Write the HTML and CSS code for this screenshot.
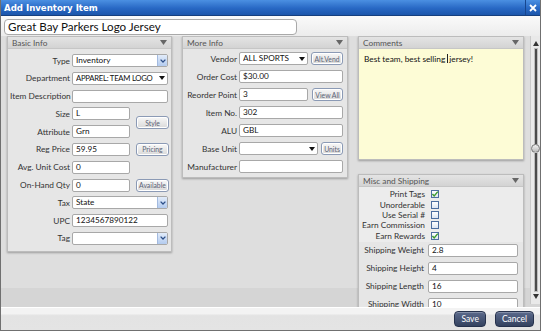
FILE: index.html
```html
<!DOCTYPE html>
<html>

<head>
    <title>Add Inventory Item</title>
    <link rel="stylesheet" href="styles.css">
</head>

<body>
    <div class="window">
        <div class="titlebar">
            <span class="title">Add Inventory Item</span>
            <span class="close">
                <svg width="8" height="8" viewBox="0 0 8 8"><path d="M1 1 L7 7 M7 1 L1 7" stroke="#fff" stroke-width="1.8" /></svg>
            </span>
        </div>

        <div class="namebar">
            <div class="name-input">Great Bay Parkers Logo Jersey</div>
        </div>

        <div class="content">
            <!-- Basic Info -->
            <section class="panel basic">
                <div class="panel-head">
                    <span>Basic Info</span>
                    <svg class="collapse" width="7" height="5" viewBox="0 0 7 5"><polygon points="0,0 7,0 3.5,5" fill="#666" /></svg>
                </div>
                <div class="grid">
                    <label>Type</label>
                    <div class="input sel wide"><span class="val">Inventory</span><span class="drop"><svg width="6" height="4" viewBox="0 0 6 4"><path d="M0.6 0.6 L3 3 L5.4 0.6" fill="none" stroke="#2d4f88" stroke-width="1.3" /></svg></span></div>

                    <label>Department</label>
                    <div class="input sel wide"><span class="val tight">APPAREL: TEAM LOGO</span><span class="tri"><svg width="6" height="4" viewBox="0 0 6 4"><polygon points="0,0 6,0 3,4" fill="#111" /></svg></span></div>

                    <label>Item Description</label>
                    <div class="input wide"></div>

                    <label>Size</label>
                    <div class="input">L</div>
                    <div class="sbtn span2">Style</div>

                    <label>Attribute</label>
                    <div class="input">Grn</div>

                    <label>Reg Price</label>
                    <div class="input">59.95</div>
                    <div class="sbtn">Pricing</div>

                    <label>Avg. Unit Cost</label>
                    <div class="input">0</div>
                    <div></div>

                    <label>On-Hand Qty</label>
                    <div class="input">0</div>
                    <div class="sbtn">Available</div>

                    <label>Tax</label>
                    <div class="input sel wide"><span class="val">State</span><span class="drop"><svg width="6" height="4" viewBox="0 0 6 4"><path d="M0.6 0.6 L3 3 L5.4 0.6" fill="none" stroke="#2d4f88" stroke-width="1.3" /></svg></span></div>

                    <label>UPC</label>
                    <div class="input wide">1234567890122</div>

                    <label>Tag</label>
                    <div class="input sel wide"><span class="val"></span><span class="drop"><svg width="6" height="4" viewBox="0 0 6 4"><path d="M0.6 0.6 L3 3 L5.4 0.6" fill="none" stroke="#2d4f88" stroke-width="1.3" /></svg></span></div>
                </div>
            </section>

            <!-- More Info -->
            <section class="panel more">
                <div class="panel-head">
                    <span>More Info</span>
                    <svg class="collapse" width="7" height="5" viewBox="0 0 7 5"><polygon points="0,0 7,0 3.5,5" fill="#666" /></svg>
                </div>
                <div class="rows">
                    <div class="row">
                        <label>Vendor</label>
                        <div class="input sel"><span class="val">ALL SPORTS</span><span class="tri"><svg width="6" height="4" viewBox="0 0 6 4"><polygon points="0,0 6,0 3,4" fill="#111" /></svg></span></div>
                        <div class="sbtn vend">Alt.Vend</div>
                    </div>
                    <div class="row">
                        <label>Order Cost</label>
                        <div class="input">$30.00</div>
                    </div>
                    <div class="row">
                        <label>Reorder Point</label>
                        <div class="input">3</div>
                        <div class="sbtn viewall">View All</div>
                    </div>
                    <div class="row">
                        <label>Item No.</label>
                        <div class="input">302</div>
                    </div>
                    <div class="row">
                        <label>ALU</label>
                        <div class="input">GBL</div>
                    </div>
                    <div class="row">
                        <label>Base Unit</label>
                        <div class="input sel"><span class="val"></span><span class="tri"><svg width="6" height="4" viewBox="0 0 6 4"><polygon points="0,0 6,0 3,4" fill="#111" /></svg></span></div>
                        <div class="sbtn units">Units</div>
                    </div>
                    <div class="row">
                        <label>Manufacturer</label>
                        <div class="input"></div>
                    </div>
                </div>
            </section>

            <div class="rightcol">
                <!-- Comments -->
                <section class="panel comments">
                    <div class="panel-head">
                        <span>Comments</span>
                        <svg class="collapse" width="7" height="5" viewBox="0 0 7 5"><polygon points="0,0 7,0 3.5,5" fill="#666" /></svg>
                    </div>
                    <div class="comment-body">Best team, best selling <span class="caret"></span>jersey!</div>
                </section>

                <!-- Misc and Shipping -->
                <section class="panel misc">
                    <div class="panel-head">
                        <span>Misc and Shipping</span>
                        <svg class="collapse" width="7" height="5" viewBox="0 0 7 5"><polygon points="0,0 7,0 3.5,5" fill="#666" /></svg>
                    </div>
                    <div class="checks">
                        <div class="check-row"><label>Print Tags</label><span class="box"><svg width="8" height="8" viewBox="0 0 8 8"><path d="M1.4 4 L3.2 6 L6.8 1.6" fill="none" stroke="#3c9a2c" stroke-width="1.4" /></svg></span></div>
                        <div class="check-row"><label>Unorderable</label><span class="box"></span></div>
                        <div class="check-row"><label>Use Serial #</label><span class="box"></span></div>
                        <div class="check-row"><label>Earn Commission</label><span class="box"></span></div>
                        <div class="check-row"><label>Earn Rewards</label><span class="box"><svg width="8" height="8" viewBox="0 0 8 8"><path d="M1.4 4 L3.2 6 L6.8 1.6" fill="none" stroke="#3c9a2c" stroke-width="1.4" /></svg></span></div>
                    </div>
                    <div class="rows ship">
                        <div class="row"><label>Shipping Weight</label><div class="input">2.8</div></div>
                        <div class="row"><label>Shipping Height</label><div class="input">4</div></div>
                        <div class="row"><label>Shipping Length</label><div class="input">16</div></div>
                        <div class="row"><label>Shipping Width</label><div class="input">10</div></div>
                    </div>
                </section>
            </div>

            <div class="scrollbar">
                <svg class="arrow-up" width="6" height="5" viewBox="0 0 6 5"><polygon points="3,0 6,5 0,5" fill="#333" /></svg>
                <div class="track top"></div>
                <div class="thumb"></div>
                <div class="track bottom"></div>
                <svg class="arrow-down" width="6" height="5" viewBox="0 0 6 5"><polygon points="0,0 6,0 3,5" fill="#333" /></svg>
            </div>
        </div>

        <div class="footer">
            <button class="action">Save</button>
            <button class="action">Cancel</button>
        </div>
    </div>
</body>

</html>
```

FILE: styles.css
```css
* {
    box-sizing: border-box;
}

body {
    margin: 0;
    font-family: Lato, "Open Sans", sans-serif;
    font-size: 8.3px;
    color: #222;
    background-color: #fff;
}

.window {
    width: 541px;
    height: 331px;
    display: flex;
    flex-direction: column;
    border: 1px solid #707070;
    border-top: none;
    background-color: #dcdcdc;
    overflow: hidden;
}

/* title bar */
.titlebar {
    flex: none;
    height: 16px;
    display: flex;
    align-items: center;
    background: linear-gradient(#4b90e2, #2868c4 55%, #1c56ab);
    border-bottom: 1px solid #163f7e;
    color: #fff;
}

.title {
    flex: 1;
    padding-left: 3px;
    font-family: "DejaVu Sans", sans-serif;
    font-weight: bold;
    font-size: 8.6px;
}

.close {
    width: 15px;
    height: 15px;
    display: flex;
    align-items: center;
    justify-content: center;
    border-left: 1px solid #17468e;
}

/* item name */
.namebar {
    flex: none;
    height: 20px;
    padding: 3px 0 0 3px;
    background: linear-gradient(#fafafa, #ececec);
}

.name-input {
    width: 293px;
    height: 16px;
    padding-left: 3px;
    border: 1px solid #a9a9a9;
    border-radius: 4px;
    background-color: #fff;
    font-size: 11.6px;
    line-height: 14px;
    color: #111;
}

/* main area */
.content {
    flex: none;
    height: 271px;
    display: flex;
    align-items: flex-start;
    padding-left: 6px;
    overflow: hidden;
    background: linear-gradient(#dedede 93%, #d5d5d5 93%);
}

.panel {
    background-color: #e6e6e6;
    border: 1px solid #bcbcbc;
    box-shadow: 0 1px 2px rgba(0, 0, 0, 0.3);
}

.panel-head {
    height: 12px;
    display: flex;
    align-items: center;
    justify-content: space-between;
    padding: 0 4px;
    background: linear-gradient(#e4e4e4, #d3d3d3);
    border-bottom: 1px solid #c6c6c6;
    color: #555;
}

.basic {
    width: 165px;
    padding-bottom: 6px;
}

.more {
    width: 166px;
    margin-left: 10px;
    padding-bottom: 4px;
}

.rightcol {
    width: 166px;
    margin-left: 10px;
}

label {
    white-space: nowrap;
    text-align: right;
    color: #333;
}

.input {
    height: 13px;
    padding: 0 3px;
    border: 1px solid #a8a8a8;
    border-radius: 2px;
    background-color: #fff;
    font-size: 8.2px;
    line-height: 11px;
    color: #111;
    white-space: nowrap;
    overflow: hidden;
}

.sel {
    display: flex;
    padding-right: 0;
}

.sel .val {
    flex: 1;
    overflow: hidden;
}

.sel .tight {
    font-size: 7.7px;
    letter-spacing: -0.25px;
}

.sel .drop {
    width: 10px;
    display: flex;
    align-items: center;
    justify-content: center;
    background: linear-gradient(#e2ecfa, #b3cbef);
    border-left: 1px solid #a3badf;
}

.sel .tri {
    width: 10px;
    flex: none;
    display: flex;
    align-items: center;
    justify-content: center;
}

.sbtn {
    height: 13px;
    display: flex;
    align-items: center;
    justify-content: center;
    border: 1px solid #8b9ab5;
    border-radius: 3px;
    background: linear-gradient(#f8f8f8, #d9d9d9);
    box-shadow: inset 0 0 0 1px #fff;
    color: #5b6275;
    font-size: 6.8px;
}

/* basic info grid */
.grid {
    display: grid;
    grid-template-columns: 60px 58px 37px;
    grid-auto-rows: 13px;
    column-gap: 2px;
    row-gap: 4.8px;
    padding: 5px 0 0 2px;
    align-items: center;
}

.grid .wide {
    grid-column: 2 / 4;
    margin-right: 1px;
}

.grid .sbtn {
    width: 33px;
    justify-self: end;
}

.grid .span2 {
    grid-row: span 2;
    align-self: center;
}

/* label / field rows */
.rows {
    padding: 3px 4px 0 2px;
}

.row {
    height: 13px;
    display: flex;
    align-items: center;
    margin-bottom: 5px;
}

.row:last-child {
    margin-bottom: 0;
}

.row label {
    width: 52px;
    margin-right: 2px;
}

.row .input {
    flex: 1;
}

.vend {
    width: 32px;
    margin-left: 3px;
}

.viewall {
    width: 31px;
    margin-left: 4px;
}

.units {
    width: 22px;
    margin-left: 3px;
}

/* comments */
.comments {
    height: 124px;
    display: flex;
    flex-direction: column;
}

.comment-body {
    flex: 1;
    padding: 5px 5px;
    background-color: #fdfcd6;
    font-size: 8.3px;
    color: #111;
}

.caret {
    display: inline-block;
    width: 1px;
    height: 9px;
    margin-right: 1px;
    vertical-align: -1px;
    background-color: #222;
}

/* misc and shipping */
.misc {
    margin-top: 14px;
}

.checks {
    padding: 2px 0 1px 3px;
    background-color: #ececec;
}

.check-row {
    height: 10.4px;
    display: flex;
    align-items: center;
}

.check-row label {
    width: 63px;
    margin-right: 6px;
}

.box {
    width: 8px;
    height: 8px;
    border: 1px solid #4d6e9f;
    background: linear-gradient(#ffffff, #dde5f1);
    display: flex;
    align-items: center;
    justify-content: center;
}

.box svg {
    flex: none;
}

.ship {
    padding: 2px 5px 0 3px;
}

.ship .row label {
    width: 62px;
    margin-right: 4px;
}

/* scrollbar */
.scrollbar {
    width: 10px;
    height: 268px;
    margin-left: 6px;
    display: flex;
    flex-direction: column;
    align-items: center;
    background-color: #e9e9e9;
    border-left: 1px solid #c9c9c9;
}

.arrow-up {
    margin-top: 5px;
    flex: none;
}

.arrow-down {
    margin-bottom: 5px;
    flex: none;
}

.track {
    width: 2px;
    background-color: #4a4a4a;
    box-shadow: 0 0 0 1px #bdbdbd;
}

.track.top {
    height: 95px;
    margin-top: 3px;
}

.track.bottom {
    flex: 1;
    margin-bottom: 3px;
}

.thumb {
    width: 9px;
    height: 9px;
    border-radius: 50%;
    border: 1px solid #777;
    background: linear-gradient(#f2f2f2, #b9b9b9);
    flex: none;
}

/* footer */
.footer {
    flex: 1;
    display: flex;
    justify-content: flex-end;
    align-items: flex-start;
    gap: 9px;
    padding: 3px 6px 0 0;
    border-top: 1px solid #fff;
    background: linear-gradient(#f3f3f3 25%, #e3e3e3 35%, #e4e4e4);
}

.action {
    height: 16px;
    padding: 0 6px;
    border: 1px solid #26324d;
    border-radius: 4px;
    background: linear-gradient(#5b6a8c, #34425f);
    box-shadow: inset 0 1px 0 rgba(255, 255, 255, 0.25);
    color: #fff;
    font-family: Lato, sans-serif;
    font-size: 8.5px;
    cursor: pointer;
}
```
